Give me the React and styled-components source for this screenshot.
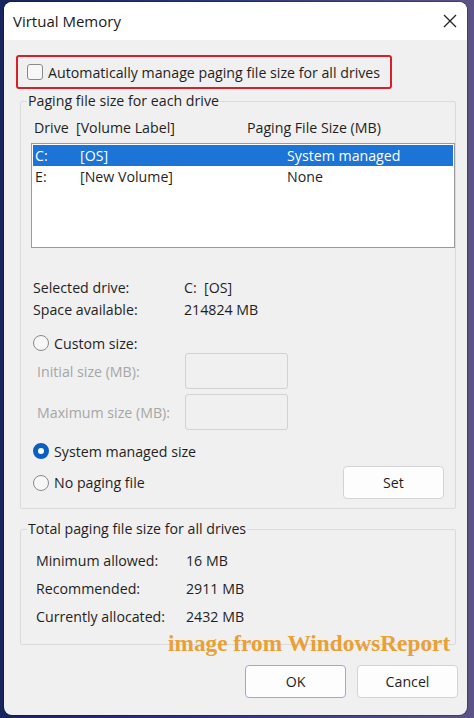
import React from 'react'
import styled, { createGlobalStyle } from 'styled-components'

const GlobalStyle = createGlobalStyle`
  html, body {
    margin: 0;
    padding: 0;
  }
  body {
    width: 474px;
    height: 718px;
    overflow: hidden;
    background: linear-gradient(90deg, #16255e 0%, #28357a 40%, #5c5388 100%);
    font-family: "Open Sans", "Noto Sans", sans-serif;
    font-size: 14.2px;
    color: #1f1f1f;
  }
`

const Window = styled.div`
  position: relative;
  margin: 2px 0 0 4px;
  width: 463px;
  height: 713px;
  border-radius: 8px;
  overflow: hidden;
  background: #f0f0f0;
  display: flex;
  flex-direction: column;
  box-shadow: 0 0 0 1px rgba(0, 0, 0, 0.25);
`

const TitleBar = styled.div`
  height: 38px;
  flex: none;
  background: #ffffff;
  display: flex;
  align-items: center;
  justify-content: space-between;
  padding-left: 9px;
`

const Title = styled.span`
  font-size: 15px;
  color: #1a1a1a;
`

const CloseButton = styled.div`
  width: 35px;
  height: 38px;
  display: flex;
  align-items: center;
  justify-content: center;
`

const Body = styled.div`
  display: flex;
  flex-direction: column;
  padding-left: 16px;
`

const HighlightBox = styled.div`
  margin: 15px 0 0 -4px;
  width: 376px;
  height: 34px;
  box-sizing: border-box;
  border: 2px solid #d8202b;
  border-radius: 3px;
  display: flex;
  align-items: center;
  padding-left: 9px;
  gap: 5px;
`

const CheckBox = styled.span`
  width: 16px;
  height: 16px;
  box-sizing: border-box;
  border: 1px solid #8a8a8a;
  border-radius: 3px;
  background: #f7f7f7;
  flex: none;
`

const Group = styled.fieldset`
  margin: ${p => p.$top}px 0 0 0;
  width: 436px;
  box-sizing: border-box;
  border: 1px solid #dadada;
  border-radius: 2px;
  padding: 0 0 ${p => p.$bottom}px 0;
  min-width: 0;
`

const Legend = styled.legend`
  margin-left: 6px;
  padding: 0 1px;
  line-height: 18px;
  color: #1f1f1f;
`

const HeaderRow = styled.div`
  margin: 9px 0 0 13px;
  height: 18px;
  line-height: 18px;
  display: grid;
  grid-template-columns: 42px 171px auto;
`

const ListBox = styled.div`
  margin: 6px 0 0 10px;
  width: 424px;
  height: 105px;
  box-sizing: border-box;
  border: 1px solid #9a9a9a;
  background: #ffffff;
  padding: 1px;
`

const ListRow = styled.div`
  height: 21px;
  line-height: 21px;
  display: grid;
  grid-template-columns: 45px 207px auto;
  padding-left: 2px;
  background: ${p => (p.$selected ? '#1c74d6' : 'transparent')};
  color: ${p => (p.$selected ? '#ffffff' : '#1f1f1f')};
`

const InfoRow = styled.div`
  margin-left: ${p => p.$indent}px;
  height: ${p => p.$h}px;
  line-height: ${p => p.$h}px;
  display: grid;
  grid-template-columns: ${p => p.$col}px auto;
`

const InfoBlock = styled.div`
  margin-top: ${p => p.$top}px;
`

const RadioRow = styled.div`
  margin: ${p => p.$top}px 0 0 12px;
  height: 20px;
  display: flex;
  align-items: center;
  gap: 5px;
`

const Radio = styled.span`
  width: 16px;
  height: 16px;
  box-sizing: border-box;
  border-radius: 50%;
  flex: none;
  border: ${p => (p.$checked ? '5px solid #0a5fbf' : '1px solid #8a8a8a')};
  background: ${p => (p.$checked ? '#ffffff' : '#f7f7f7')};
`

const SizeRow = styled.div`
  margin: ${p => p.$top}px 0 0 16px;
  height: 36px;
  display: grid;
  grid-template-columns: 148px 103px;
  align-items: center;
  color: #a6a6a6;
`

const SizeInput = styled.div`
  height: 36px;
  box-sizing: border-box;
  border: 1px solid #d2d2d2;
  border-radius: 3px;
  background: #f0f0f0;
`

const SetRow = styled.div`
  margin: 5px 11px 0 0;
  height: 33px;
  display: flex;
  align-items: center;
  justify-content: space-between;
`

const Button = styled.div`
  width: 101px;
  height: 33px;
  box-sizing: border-box;
  border: 1px solid ${p => (p.$primary ? '#8fb0d4' : '#d3d3d3')};
  border-radius: 4px;
  background: #fdfdfd;
  display: flex;
  align-items: center;
  justify-content: center;
  color: #1f1f1f;
`

const Footer = styled.div`
  margin: 20px 9px 0 0;
  display: flex;
  justify-content: flex-end;
  gap: 11px;
`

const Watermark = styled.div`
  position: absolute;
  left: 164px;
  top: 628px;
  font-family: "Liberation Serif", "DejaVu Serif", serif;
  font-weight: bold;
  font-size: 23.3px;
  color: #e9a035;
  white-space: nowrap;
`

const drives = [
  { drive: 'C:', label: '[OS]', size: 'System managed', selected: true },
  { drive: 'E:', label: '[New Volume]', size: 'None', selected: false },
]

export default function App() {
  return (
    <>
      <GlobalStyle />
      <Window>
        <TitleBar>
          <Title>Virtual Memory</Title>
          <CloseButton>
            <svg width="14" height="14" viewBox="0 0 14 14">
              <path d="M1 1 L13 13 M13 1 L1 13" stroke="#222" strokeWidth="1.3" fill="none" />
            </svg>
          </CloseButton>
        </TitleBar>

        <Body>
          <HighlightBox>
            <CheckBox />
            <span>Automatically manage paging file size for all drives</span>
          </HighlightBox>

          <Group $top={3} $bottom={9}>
            <Legend>Paging file size for each drive</Legend>
            <HeaderRow>
              <span>Drive</span>
              <span>[Volume Label]</span>
              <span>Paging File Size (MB)</span>
            </HeaderRow>
            <ListBox>
              {drives.map(d => (
                <ListRow key={d.drive} $selected={d.selected}>
                  <span>{d.drive}</span>
                  <span>{d.label}</span>
                  <span>{d.size}</span>
                </ListRow>
              ))}
            </ListBox>

            <InfoBlock $top={29}>
              <InfoRow $indent={12} $h={22} $col={151}>
                <span>Selected drive:</span>
                <span>C:&nbsp; [OS]</span>
              </InfoRow>
              <InfoRow $indent={12} $h={22} $col={151}>
                <span>Space available:</span>
                <span>214824 MB</span>
              </InfoRow>
            </InfoBlock>

            <RadioRow $top={12}>
              <Radio />
              <span>Custom size:</span>
            </RadioRow>
            <SizeRow $top={0}>
              <span>Initial size (MB):</span>
              <SizeInput />
            </SizeRow>
            <SizeRow $top={5}>
              <span>Maximum size (MB):</span>
              <SizeInput />
            </SizeRow>

            <RadioRow $top={11}>
              <Radio $checked />
              <span>System managed size</span>
            </RadioRow>
            <SetRow>
              <RadioRow $top={0}>
                <Radio />
                <span>No paging file</span>
              </RadioRow>
              <Button>Set</Button>
            </SetRow>
          </Group>

          <Group $top={11} $bottom={13}>
            <Legend>Total paging file size for all drives</Legend>
            <InfoBlock $top={9}>
              <InfoRow $indent={15} $h={28} $col={150}>
                <span>Minimum allowed:</span>
                <span>16 MB</span>
              </InfoRow>
              <InfoRow $indent={15} $h={28} $col={150}>
                <span>Recommended:</span>
                <span>2911 MB</span>
              </InfoRow>
              <InfoRow $indent={15} $h={28} $col={150}>
                <span>Currently allocated:</span>
                <span>2432 MB</span>
              </InfoRow>
            </InfoBlock>
          </Group>

          <Footer>
            <Button $primary>OK</Button>
            <Button>Cancel</Button>
          </Footer>
        </Body>

        <Watermark>image from WindowsReport</Watermark>
      </Window>
    </>
  )
}
